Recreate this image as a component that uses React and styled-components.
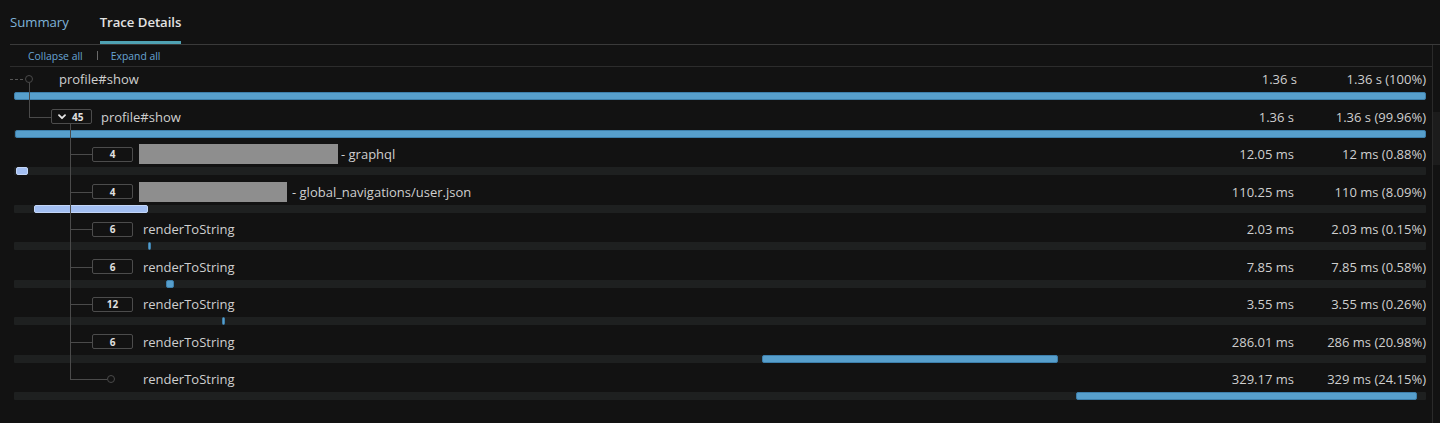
import React from "react";
import styled, { createGlobalStyle, css } from "styled-components";

const GlobalStyle = createGlobalStyle`
  html, body { margin: 0; padding: 0; background: #121212; }
  body { font-family: "Open Sans", "Noto Sans", sans-serif; color: #cfcfcf; }
  * { box-sizing: border-box; }
`;

const SLOT = 41;
const STEM = 19;

const Page = styled.div`
  width: 1440px;
  height: 423px;
  background: #121212;
  overflow: hidden;
  display: flex;
  flex-direction: column;
`;

const TabBar = styled.div`
  display: flex;
  align-items: stretch;
  gap: 31px;
  height: 45px;
  margin-left: 10px;
  border-bottom: 1px solid #3a3a3a;
`;

const Tab = styled.div`
  display: flex;
  align-items: center;
  height: 44px;
  padding-top: 3px;
  font-size: 13.2px;
  letter-spacing: -0.05px;
  border-bottom: 3px solid ${(p) => (p.$active ? "#4fa2b3" : "transparent")};
  color: ${(p) => (p.$active ? "#e2e2e2" : "#7fb2d8")};
  font-weight: ${(p) => (p.$active ? 600 : 400)};
`;

const Main = styled.div`
  flex: 1;
  display: flex;
`;

const Content = styled.div`
  flex: 1;
  margin-left: 10px;
  display: flex;
  flex-direction: column;
`;

const Scrollbar = styled.div`
  width: 8px;
  border-left: 1px solid #2a2a2a;
  display: flex;
  flex-direction: column;
  padding-top: 67px;
`;

const Thumb = styled.div`
  height: 53px;
  background: #1c1c1c;
`;

const Toolbar = styled.div`
  height: 22px;
  display: flex;
  align-items: center;
  padding-left: 18px;
  border-bottom: 1px solid #2c2c2c;
  font-size: 10.4px;
`;

const LinkButton = styled.span`
  color: #68a4d4;
  cursor: pointer;
`;

const Sep = styled.span`
  width: 1px;
  height: 9px;
  background: #6a6a6a;
  margin: 0 13px 0 14px;
`;

const Row = styled.div`
  position: relative;
  height: 37.5px;
  padding-top: 2px;
`;

const Line = styled.div`
  display: flex;
  align-items: center;
  height: 20px;
  padding-right: 6px;
  font-size: 13px;
  color: #cfcfcf;
  position: relative;
  z-index: 1;
`;

const Indent = styled.div`
  flex: none;
  width: ${(p) => p.$depth * SLOT}px;
`;

const Slot = styled.div`
  flex: none;
  width: ${SLOT}px;
  height: 20px;
  display: flex;
  align-items: center;
`;

const CountBox = styled.div`
  width: 41px;
  height: 15px;
  border: 1px solid #4c4c4c;
  border-radius: 2px;
  background: #121212;
  display: flex;
  align-items: center;
  justify-content: ${(p) => (p.$chevron ? "flex-start" : "center")};
  padding-left: ${(p) => (p.$chevron ? "6px" : "0")};
  gap: 6px;
  font-size: 10px;
  font-weight: 700;
  color: #e0e0e0;
  line-height: 1;
`;

const LeafDot = styled.div`
  width: 8px;
  height: 8px;
  margin-left: ${STEM - 4}px;
  border: 1px solid #4a4a4a;
  border-radius: 50%;
  background: #121212;
`;

const Label = styled.div`
  flex: 1;
  display: flex;
  align-items: center;
  min-width: 0;
  white-space: pre;
  padding-left: ${(p) => p.$pad}px;
`;

const Redacted = styled.span`
  display: inline-block;
  width: ${(p) => p.$w}px;
  height: 20px;
  background: #8e8e8e;
  margin-right: ${(p) => p.$gap}px;
`;

const Duration = styled.div`
  text-align: right;
  white-space: nowrap;
  padding-right: ${(p) => (p.$root ? 129 : 132)}px;
`;

const Total = styled.div`
  position: absolute;
  right: 6px;
  white-space: nowrap;
`;

const Track = styled.div`
  position: relative;
  height: 8px;
  margin: 3px 6px 0 4px;
  background: #1e2020;
  border-radius: 1px;
`;

const Bar = styled.div`
  position: absolute;
  top: 0;
  bottom: 0;
  min-width: 3px;
  border-radius: 2px;
  ${(p) =>
    p.$tone === "light"
      ? css`
          background: #a3bff2;
          border: 1px solid #c3d6f7;
        `
      : css`
          background: #579fcc;
          border: 1px solid #3d7fab;
        `}
`;

/* tree connector lines drawn over the rows */
const VLine = styled.div`
  position: absolute;
  z-index: 2;
  width: 1px;
  background: #4a4a4a;
  left: ${(p) => p.$x}px;
  top: ${(p) => p.$top}px;
  ${(p) => (p.$bottom != null ? `bottom: ${p.$bottom}px;` : `height: ${p.$h}px;`)}
`;

const HLine = styled.div`
  position: absolute;
  z-index: 0;
  height: 1px;
  top: 12px;
  left: ${(p) => p.$x}px;
  width: ${(p) => p.$w}px;
  ${(p) =>
    p.$dashed
      ? css`
          background: repeating-linear-gradient(
            to right,
            #555 0 3px,
            transparent 3px 5px
          );
        `
      : css`
          background: #4a4a4a;
        `}
`;

const Chevron = () => (
  <svg width="8" height="6" viewBox="0 0 8 6" fill="none">
    <path d="M1 1.2 L4 4.2 L7 1.2" stroke="#e6e6e6" strokeWidth="1.8" strokeLinecap="round" strokeLinejoin="round" />
  </svg>
);

const TOTAL_W = 1412;
const px = (a) => (a / TOTAL_W) * 100;

const rows = [
  { depth: 0, leaf: true, root: true, label: "profile#show", pad: 8, dur: "1.36 s", total: "1.36 s (100%)", x: 0, w: 1412, parent: true, nodeBottom: 14 },
  { depth: 1, count: 45, chevron: true, last: true, label: "profile#show", pad: 9, dur: "1.36 s", total: "1.36 s (99.96%)", x: 1, w: 1411, parent: true, nodeBottom: 17.5 },
  { depth: 2, count: 4, redact: 199, gap: 3, label: "- graphql", pad: 6, dur: "12.05 ms", total: "12 ms (0.88%)", x: 2, w: 12, tone: "light" },
  { depth: 2, count: 4, redact: 148, gap: 5, label: "- global_navigations/user.json", pad: 6, dur: "110.25 ms", total: "110 ms (8.09%)", x: 20, w: 114, tone: "light" },
  { depth: 2, count: 6, label: "renderToString", pad: 10, dur: "2.03 ms", total: "2.03 ms (0.15%)", x: 134, w: 3 },
  { depth: 2, count: 6, label: "renderToString", pad: 10, dur: "7.85 ms", total: "7.85 ms (0.58%)", x: 152, w: 8 },
  { depth: 2, count: 12, label: "renderToString", pad: 10, dur: "3.55 ms", total: "3.55 ms (0.26%)", x: 208, w: 3 },
  { depth: 2, count: 6, label: "renderToString", pad: 10, dur: "286.01 ms", total: "286 ms (20.98%)", x: 748, w: 296 },
  { depth: 2, leaf: true, last: true, label: "renderToString", pad: 10, dur: "329.17 ms", total: "329 ms (24.15%)", x: 1062, w: 341 },
];

function Connectors({ row }) {
  const items = [];
  if (row.root) {
    items.push(<HLine key="d" $dashed $x={0} $w={STEM - 4} />);
  }
  if (row.depth > 0) {
    const x0 = (row.depth - 1) * SLOT + STEM;
    const slotLeft = row.depth * SLOT;
    items.push(
      row.last ? (
        <VLine key="v" $x={x0} $top={0} $h={13} />
      ) : (
        <VLine key="v" $x={x0} $top={0} $bottom={0} />
      )
    );
    items.push(<HLine key="h" $x={x0} $w={slotLeft - x0 + (row.leaf ? STEM - 4 : 0)} />);
  }
  if (row.parent) {
    const x = row.depth * SLOT + STEM;
    items.push(<VLine key="p" $x={x} $top={2 + row.nodeBottom} $bottom={0} />);
  }
  return items;
}

function TraceRow({ row }) {
  return (
    <Row>
      <Connectors row={row} />
      <Line>
        <Indent $depth={row.depth} />
        <Slot>
          {row.leaf ? (
            <LeafDot />
          ) : (
            <CountBox $chevron={row.chevron}>
              {row.chevron && <Chevron />}
              <span>{row.count}</span>
            </CountBox>
          )}
        </Slot>
        <Label $pad={row.pad}>
          {row.redact && <Redacted $w={row.redact} $gap={row.gap} />}
          {row.label}
        </Label>
        <Duration $root={row.root}>{row.dur}</Duration>
        <Total>{row.total}</Total>
      </Line>
      <Track>
        <Bar
          $tone={row.tone}
          style={{ left: `${px(row.x)}%`, width: `${px(row.w)}%` }}
        />
      </Track>
    </Row>
  );
}

export default function App() {
  return (
    <>
      <GlobalStyle />
      <Page>
        <TabBar>
          <Tab>Summary</Tab>
          <Tab $active>Trace Details</Tab>
        </TabBar>
        <Main>
          <Content>
            <Toolbar>
              <LinkButton>Collapse all</LinkButton>
              <Sep />
              <LinkButton>Expand all</LinkButton>
            </Toolbar>
            {rows.map((r, i) => (
              <TraceRow key={i} row={r} />
            ))}
          </Content>
          <Scrollbar>
            <Thumb />
          </Scrollbar>
        </Main>
      </Page>
    </>
  );
}
